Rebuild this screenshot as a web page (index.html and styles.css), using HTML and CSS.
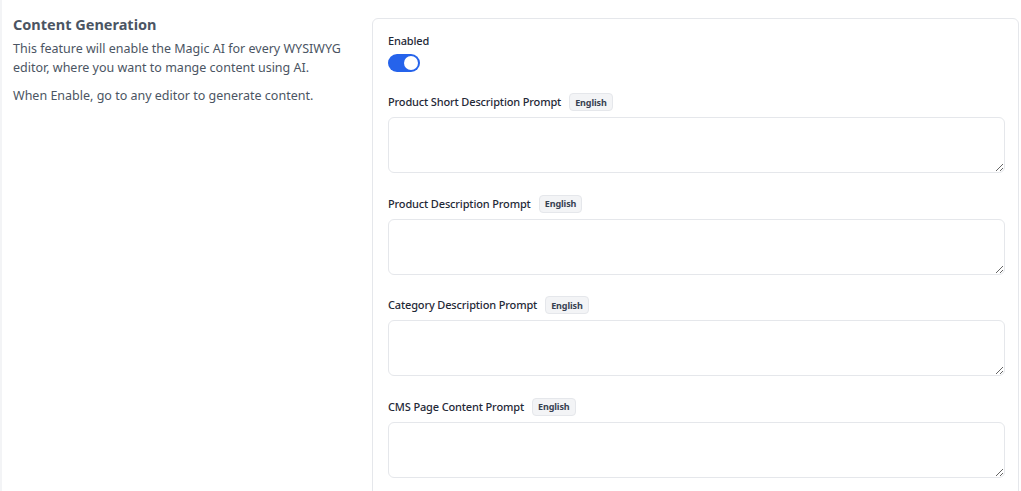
FILE: index.html
```html
<!DOCTYPE html>
<html lang="en">
<head>
<meta charset="utf-8">
<title>Content Generation</title>
<link rel="stylesheet" href="styles.css">
</head>
<body>
<div class="page">
  <section class="settings">
    <div class="intro">
      <h2 class="intro-title">Content Generation</h2>
      <p class="intro-text">This feature will enable the Magic AI for every WYSIWYG editor, where you want to mange content using AI.</p>
      <p class="intro-text">When Enable, go to any editor to generate content.</p>
    </div>
    <div class="card">
      <div class="field field-toggle">
        <label class="field-label">Enabled</label>
        <span class="toggle"><span class="toggle-knob"></span></span>
      </div>
      <div class="field">
        <div class="field-head">
          <label class="field-label">Product Short Description Prompt</label>
          <span class="badge">English</span>
        </div>
        <textarea class="textarea"></textarea>
      </div>
      <div class="field">
        <div class="field-head">
          <label class="field-label">Product Description Prompt</label>
          <span class="badge">English</span>
        </div>
        <textarea class="textarea"></textarea>
      </div>
      <div class="field">
        <div class="field-head">
          <label class="field-label">Category Description Prompt</label>
          <span class="badge">English</span>
        </div>
        <textarea class="textarea"></textarea>
      </div>
      <div class="field">
        <div class="field-head">
          <label class="field-label">CMS Page Content Prompt</label>
          <span class="badge">English</span>
        </div>
        <textarea class="textarea"></textarea>
      </div>
    </div>
  </section>
</div>
</body>
</html>
```
FILE: styles.css
```css
html, body {
  margin: 0;
  padding: 0;
  background: #ffffff;
}

body {
  font-family: "Noto Sans", "Open Sans", sans-serif;
  color: #4b5563;
}

.page {
  border-left: 2px solid #f3f4f6;
  padding: 18px 2px 0 11px;
  min-height: 100vh;
  box-sizing: border-box;
}

.settings {
  display: grid;
  grid-template-columns: 335px 1fr;
  column-gap: 24px;
  align-items: start;
}

.intro-title {
  margin: -3px 0 6px 0;
  font-size: 14.5px;
  line-height: 18px;
  font-weight: 700;
  color: #4b5563;
}

.intro-text {
  margin: 0 0 9px 0;
  font-size: 12.5px;
  line-height: 19px;
  color: #4b5563;
}

.card {
  border: 1px solid #e5e7eb;
  border-radius: 6px;
  padding: 14px 13px 40px 15px;
  background: #ffffff;
}

.field {
  display: flex;
  flex-direction: column;
  margin-bottom: 21.5px;
}

.field-toggle {
  gap: 5px;
  margin-bottom: 21px;
}

.field-label {
  font-size: 11px;
  line-height: 16px;
  font-weight: 500;
  letter-spacing: -0.15px;
  color: #1f2937;
}

.field-head {
  display: flex;
  align-items: center;
  gap: 8px;
  height: 18px;
  margin-bottom: 6px;
}

.badge {
  display: inline-flex;
  align-items: center;
  height: 18px;
  padding: 0 5px;
  box-sizing: border-box;
  border: 1px solid #e5e7eb;
  border-radius: 4px;
  background: #f3f4f6;
  font-size: 9px;
  font-weight: 700;
  letter-spacing: -0.1px;
  color: #374151;
}

.toggle {
  position: relative;
  display: block;
  width: 32px;
  height: 18px;
  border-radius: 9px;
  background: #2563eb;
}

.toggle-knob {
  position: absolute;
  top: 2px;
  right: 2px;
  width: 14px;
  height: 14px;
  border-radius: 50%;
  background: #ffffff;
}

.textarea {
  display: block;
  width: 100%;
  height: 56px;
  box-sizing: border-box;
  border: 1px solid #e5e7eb;
  border-radius: 6px;
  padding: 6px 8px;
  font-family: inherit;
  font-size: 13px;
  resize: vertical;
  background: #ffffff;
}
```
